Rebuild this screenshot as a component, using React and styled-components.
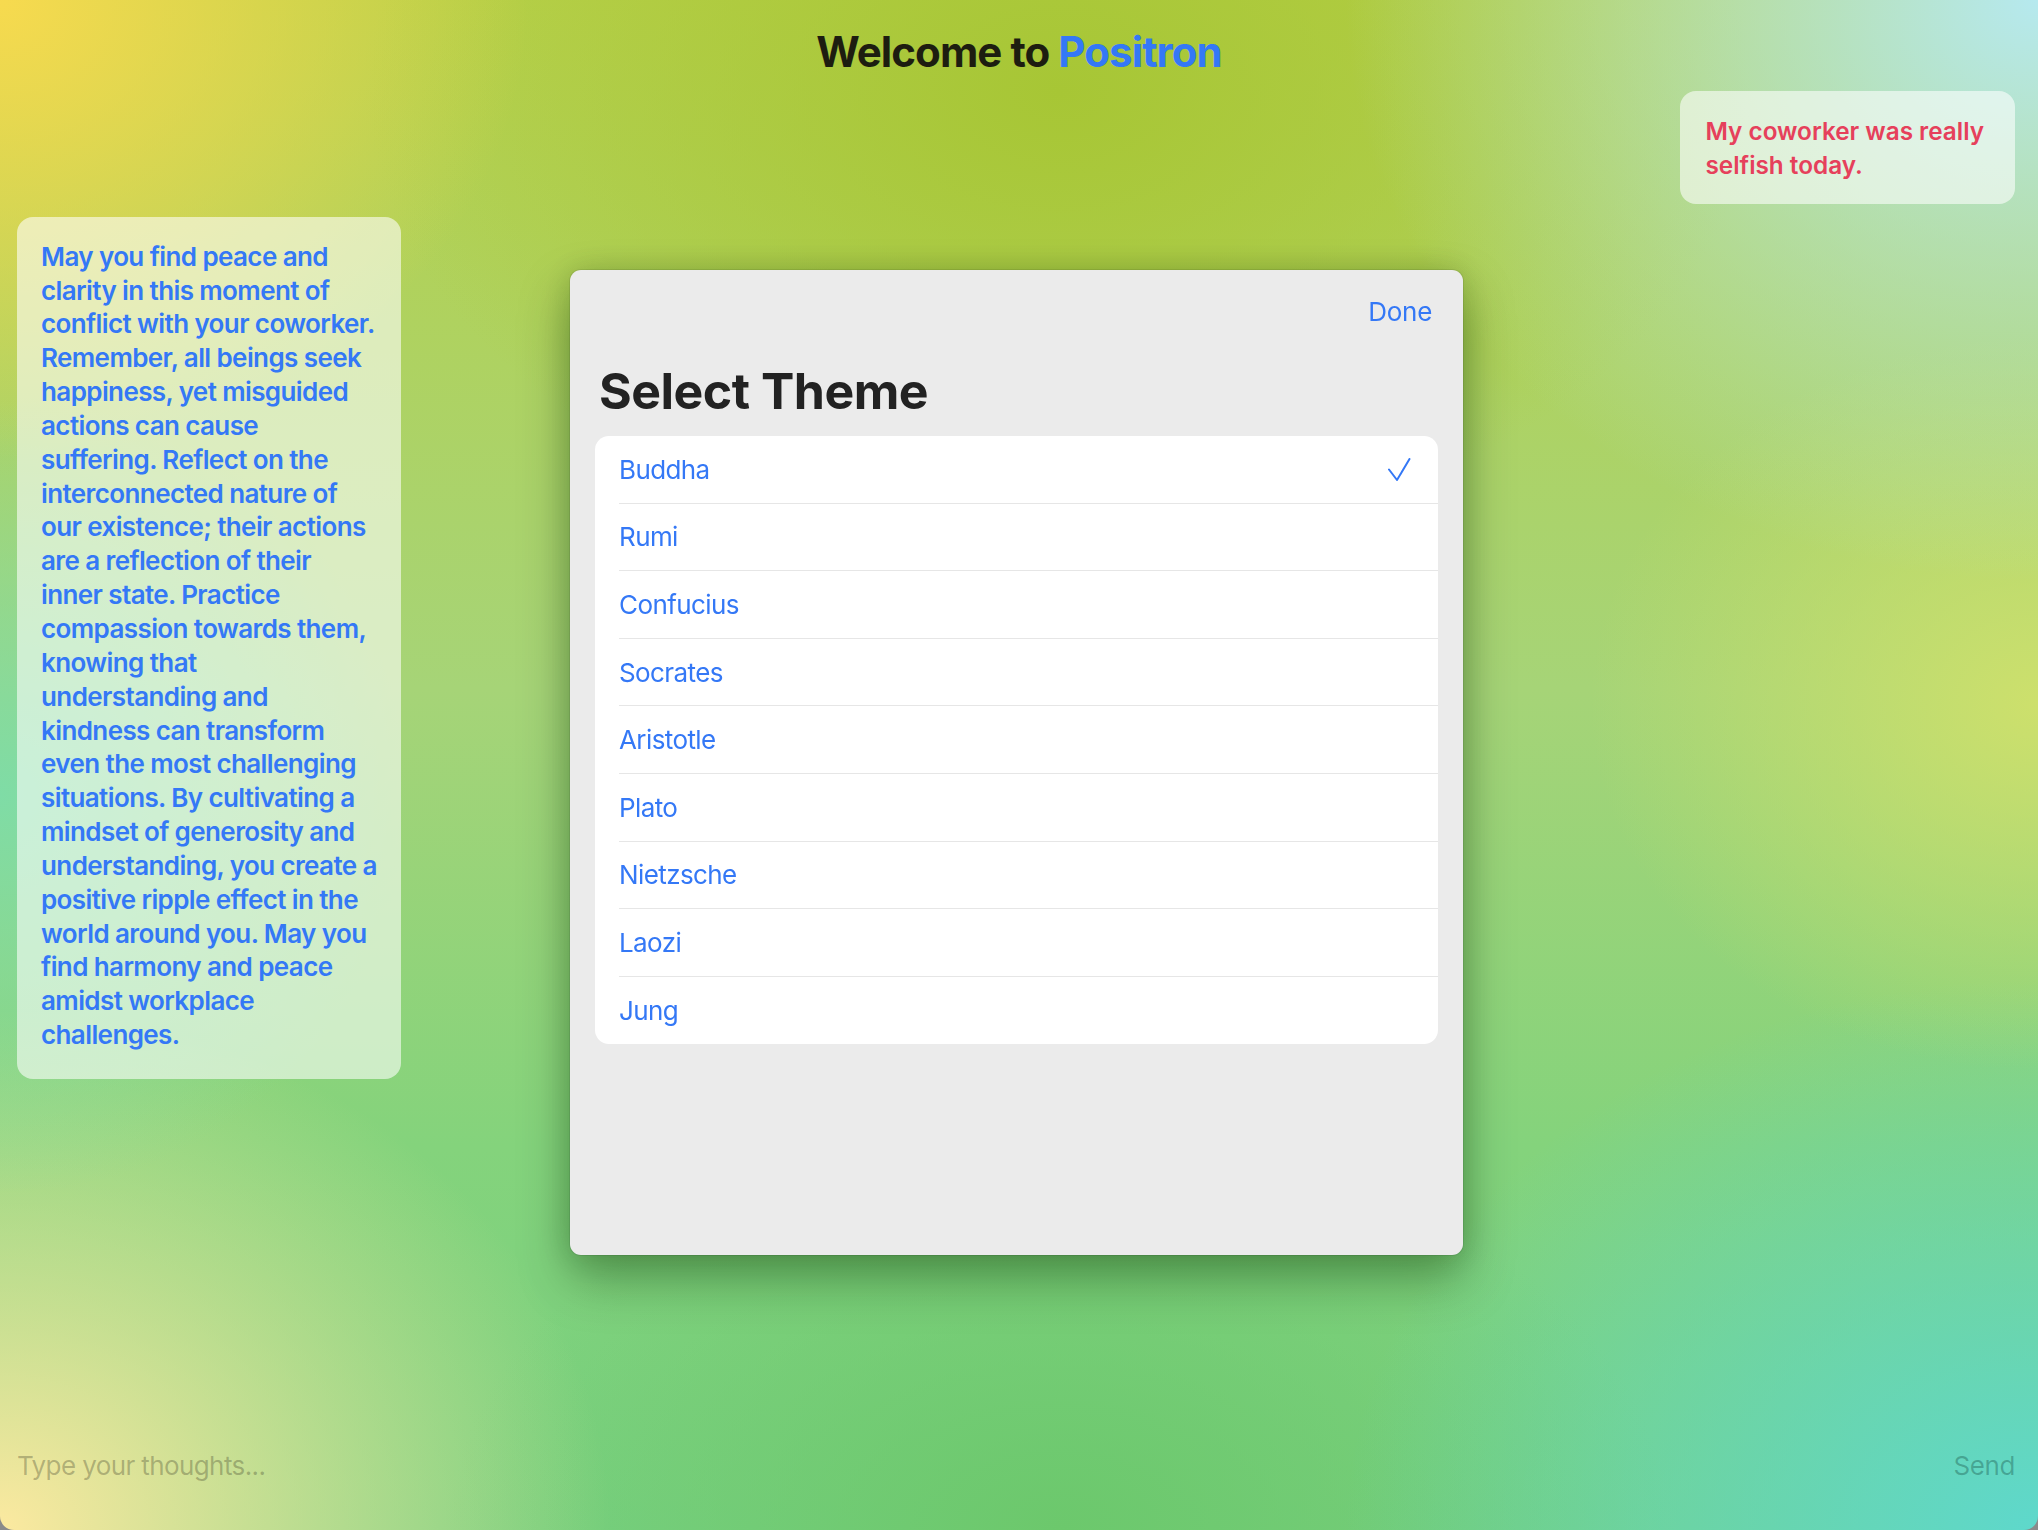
import React, { useState } from "react";
import styled, { createGlobalStyle } from "styled-components";

const GlobalStyle = createGlobalStyle`
  html, body {
    margin: 0;
    padding: 0;
    height: 100%;
    background: #8a8a8a;
  }
  body {
    font-family: Inter, "Noto Sans", "Liberation Sans", sans-serif;
    -webkit-font-smoothing: antialiased;
  }
  * {
    box-sizing: border-box;
  }
`;

const Screen = styled.div`
  width: 100vw;
  height: 100vh;
  display: flex;
  flex-direction: column;
  overflow: hidden;
  border-radius: 0 0 14px 14px;
  background:
    radial-gradient(ellipse 26% 30% at 0% 0%, #f7da4f 0%, rgba(247, 218, 79, 0) 100%),
    radial-gradient(ellipse 34% 38% at 100% 0%, #b6e9ef 0%, rgba(182, 233, 239, 0) 100%),
    radial-gradient(ellipse 34% 30% at 52% 6%, #a7c635 0%, rgba(167, 198, 53, 0) 100%),
    radial-gradient(ellipse 20% 26% at 0% 52%, #7fdca6 0%, rgba(127, 220, 166, 0) 100%),
    radial-gradient(ellipse 22% 24% at 100% 46%, #cde06c 0%, rgba(205, 224, 108, 0) 100%),
    radial-gradient(ellipse 30% 34% at 0% 100%, #fce9a0 0%, rgba(252, 233, 160, 0) 100%),
    radial-gradient(ellipse 34% 36% at 100% 100%, #5ed8cc 0%, rgba(94, 216, 204, 0) 100%),
    radial-gradient(ellipse 30% 26% at 52% 100%, #6cc86c 0%, rgba(108, 200, 108, 0) 100%),
    linear-gradient(180deg, #b7d04a 0%, #a6d477 45%, #84d37c 75%, #78d080 100%);
`;

const Header = styled.h1`
  margin: 0;
  padding-top: 25px;
  text-align: center;
  font-size: 42px;
  line-height: 53px;
  font-weight: 700;
  letter-spacing: -0.022em;
  color: #1d1d10;
`;

const Accent = styled.span`
  color: #3478f6;
`;

const Thread = styled.div`
  flex: 1;
  display: flex;
  flex-direction: column;
  padding: 0 23px 0 17px;
`;

const Bubble = styled.div`
  align-self: ${(p) => (p.$mine ? "flex-end" : "flex-start")};
  margin-top: 13px;
  padding: ${(p) => (p.$mine ? "24px 31px 21px 25px" : "23px 24px 27px")};
  border-radius: 16px;
  background: rgba(255, 255, 255, 0.58);
  color: ${(p) => (p.$mine ? "#e6405b" : "#3478f6")};
  font-size: ${(p) => (p.$mine ? "24.3px" : "26px")};
  letter-spacing: ${(p) => (p.$mine ? "0" : "-0.6px")};
  line-height: 33.85px;
  font-weight: 600;
`;

const Line = styled.span`
  display: block;
  white-space: nowrap;
`;

const InputBar = styled.form`
  height: 130px;
  display: flex;
  align-items: center;
  justify-content: space-between;
  padding: 0 23px 0 17px;
`;

const Field = styled.input`
  flex: 1;
  border: none;
  outline: none;
  background: transparent;
  font-family: inherit;
  font-size: 26px;
  letter-spacing: -0.6px;
  color: #1d1d10;
  padding: 0;

  &::placeholder {
    color: rgba(60, 60, 40, 0.32);
  }
`;

const SendButton = styled.button`
  border: none;
  background: transparent;
  padding: 0;
  font-family: inherit;
  font-size: 26px;
  letter-spacing: -0.4px;
  color: rgba(0, 40, 30, 0.28);
`;

const Overlay = styled.div`
  position: fixed;
  inset: 0;
  display: flex;
  align-items: center;
  justify-content: center;
`;

const Sheet = styled.div`
  width: 893px;
  height: 985px;
  margin: 0 5px 5px 0;
  border-radius: 11px;
  background: #ebebeb;
  padding: 26px 25px 0;
  box-shadow:
    0 0 0 1px rgba(0, 0, 0, 0.08),
    0 0 30px rgba(20, 60, 0, 0.18),
    0 24px 50px rgba(10, 50, 0, 0.38);
`;

const TopBar = styled.div`
  display: flex;
  justify-content: flex-end;
  padding-right: 6px;
`;

const DoneButton = styled.button`
  border: none;
  background: transparent;
  padding: 0;
  font-family: inherit;
  font-size: 26px;
  line-height: 32px;
  letter-spacing: -0.3px;
  color: #3478f6;
`;

const Title = styled.h2`
  margin: 33px 0 15px 4px;
  font-size: 50px;
  line-height: 60px;
  font-weight: 700;
  letter-spacing: -0.01em;
  color: #222;
`;

const List = styled.ul`
  list-style: none;
  margin: 0;
  padding: 0 0 0 24px;
  background: #fff;
  border-radius: 14px;
  overflow: hidden;
`;

const Row = styled.li`
  height: 67.6px;
  display: flex;
  align-items: center;
  justify-content: space-between;
  padding-right: 27px;
  font-size: 26px;
  letter-spacing: -0.6px;
  color: #3478f6;
  cursor: pointer;
  border-bottom: ${(p) => (p.$last ? "none" : "1.5px solid #e6e6e6")};
`;

const Check = () => (
  <svg width="23" height="23" viewBox="0 0 23 23" fill="none">
    <polyline
      points="1,11.5 9,22 21.5,1"
      stroke="#3478f6"
      strokeWidth="2"
      strokeLinecap="round"
      strokeLinejoin="round"
    />
  </svg>
);

const themes = [
  "Buddha",
  "Rumi",
  "Confucius",
  "Socrates",
  "Aristotle",
  "Plato",
  "Nietzsche",
  "Laozi",
  "Jung",
];

const mine = ["My coworker was really", "selfish today."];

const reply = [
  "May you find peace and",
  "clarity in this moment of",
  "conflict with your coworker.",
  "Remember, all beings seek",
  "happiness, yet misguided",
  "actions can cause",
  "suffering. Reflect on the",
  "interconnected nature of",
  "our existence; their actions",
  "are a reflection of their",
  "inner state. Practice",
  "compassion towards them,",
  "knowing that",
  "understanding and",
  "kindness can transform",
  "even the most challenging",
  "situations. By cultivating a",
  "mindset of generosity and",
  "understanding, you create a",
  "positive ripple effect in the",
  "world around you. May you",
  "find harmony and peace",
  "amidst workplace",
  "challenges.",
];

export default function App() {
  const [theme, setTheme] = useState("Buddha");
  const [draft, setDraft] = useState("");

  return (
    <>
      <GlobalStyle />
      <Screen>
        <Header>
          Welcome to <Accent>Positron</Accent>
        </Header>
        <Thread>
          <Bubble $mine>
            {mine.map((l) => (
              <Line key={l}>{l}</Line>
            ))}
          </Bubble>
          <Bubble>
            {reply.map((l) => (
              <Line key={l}>{l}</Line>
            ))}
          </Bubble>
        </Thread>
        <InputBar onSubmit={(e) => e.preventDefault()}>
          <Field
            placeholder="Type your thoughts..."
            value={draft}
            onChange={(e) => setDraft(e.target.value)}
          />
          <SendButton type="submit">Send</SendButton>
        </InputBar>
      </Screen>
      <Overlay>
        <Sheet>
          <TopBar>
            <DoneButton>Done</DoneButton>
          </TopBar>
          <Title>Select Theme</Title>
          <List>
            {themes.map((t, i) => (
              <Row
                key={t}
                $last={i === themes.length - 1}
                onClick={() => setTheme(t)}
              >
                {t}
                {theme === t && <Check />}
              </Row>
            ))}
          </List>
        </Sheet>
      </Overlay>
    </>
  );
}
